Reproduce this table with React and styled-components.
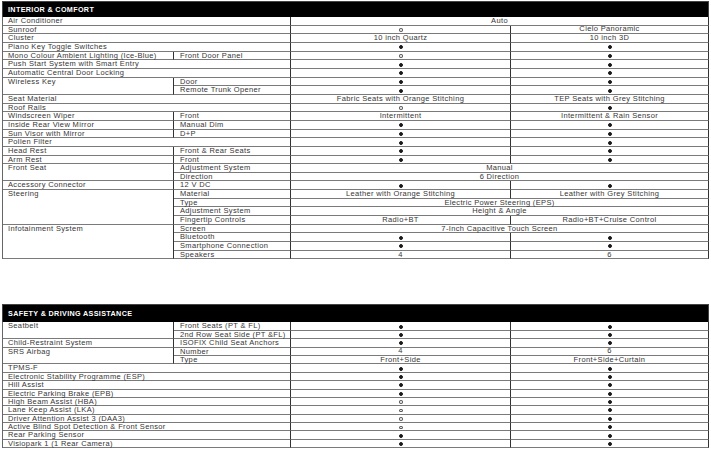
import React from "react";
import styled, { createGlobalStyle } from "styled-components";

const GlobalStyle = createGlobalStyle`
  html, body {
    margin: 0;
    padding: 0;
    background: #fff;
  }
  body {
    font-family: "Liberation Sans", Arial, sans-serif;
    color: #333;
  }
`;

const D = "dot";
const O = "ring";

const interior = [
  { f: "Air Conditioner", v: ["Auto"] },
  { f: "Sunroof", v: [O, "Cielo Panoramic"] },
  { f: "Cluster", v: ["10 inch Quartz", "10 inch 3D"] },
  { f: "Piano Key Toggle Switches", v: [D, D] },
  { f: "Mono Colour Ambient Lighting (Ice-Blue)", s: "Front Door Panel", v: [O, D] },
  { f: "Push Start System with Smart Entry", v: [D, D] },
  { f: "Automatic Central Door Locking", v: [D, D] },
  { f: "Wireless Key", rows: 2, s: "Door", v: [D, D] },
  { s: "Remote Trunk Opener", v: [D, D] },
  { f: "Seat Material", v: ["Fabric Seats with Orange Stitching", "TEP Seats with Grey Stitching"] },
  { f: "Roof Rails", v: [O, D] },
  { f: "Windscreen Wiper", s: "Front", v: ["Intermittent", "Intermittent & Rain Sensor"] },
  { f: "Inside Rear View Mirror", s: "Manual Dim", v: [D, D] },
  { f: "Sun Visor with Mirror", s: "D+P", v: [D, D] },
  { f: "Pollen Filter", v: [D, D] },
  { f: "Head Rest", s: "Front & Rear Seats", v: [D, D] },
  { f: "Arm Rest", s: "Front", v: [D, D] },
  { f: "Front Seat", rows: 2, s: "Adjustment System", v: ["Manual"] },
  { s: "Direction", v: ["6 Direction"] },
  { f: "Accessory Connector", s: "12 V DC", v: [D, D] },
  { f: "Steering", rows: 4, s: "Material", v: ["Leather with Orange Stitching", "Leather with Grey Stitching"] },
  { s: "Type", v: ["Electric Power Steering (EPS)"] },
  { s: "Adjustment System", v: ["Height & Angle"] },
  { s: "Fingertip Controls", v: ["Radio+BT", "Radio+BT+Cruise Control"] },
  { f: "Infotainment System", rows: 4, s: "Screen", v: ["7-Inch Capacitive Touch Screen"] },
  { s: "Bluetooth", v: [D, D] },
  { s: "Smartphone Connection", v: [D, D] },
  { s: "Speakers", v: ["4", "6"] },
];

const safety = [
  { f: "Seatbelt", rows: 2, s: "Front Seats (PT & FL)", v: [D, D] },
  { s: "2nd Row Seat Side (PT &FL)", v: [D, D] },
  { f: "Child-Restraint System", s: "ISOFIX Child Seat Anchors", v: [D, D] },
  { f: "SRS Airbag", rows: 2, s: "Number", v: ["4", "6"] },
  { s: "Type", v: ["Front+Side", "Front+Side+Curtain"] },
  { f: "TPMS-F", v: [D, D] },
  { f: "Electronic Stability Programme (ESP)", v: [D, D] },
  { f: "Hill Assist", v: [D, D] },
  { f: "Electric Parking Brake (EPB)", v: [D, D] },
  { f: "High Beam Assist (HBA)", v: [O, D] },
  { f: "Lane Keep Assist (LKA)", v: [O, D] },
  { f: "Driver Attention Assist 3 (DAA3)", v: [O, D] },
  { f: "Active Blind Spot Detection & Front Sensor", v: [O, D] },
  { f: "Rear Parking Sensor", v: [D, D] },
  { f: "Visiopark 1 (1 Rear Camera)", v: [D, D] },
];

const Page = styled.div`
  display: flex;
  flex-direction: column;
  gap: 45px;
  padding: 1px 2px 0 2px;
  width: 707px;
`;

const Section = styled.section`
  display: flex;
  flex-direction: column;
`;

const HeaderBar = styled.div`
  height: ${(p) => p.$h}px;
  background: #000;
  color: #fff;
  font-weight: 700;
  font-size: 7.2px;
  letter-spacing: 0.35px;
  line-height: ${(p) => p.$h}px;
  padding-left: 5px;
  border: 1px solid #444;
  border-bottom: none;
  box-sizing: border-box;
`;

const Grid = styled.div`
  display: grid;
  grid-template-columns: 171px 117px 220px 1fr;
  grid-auto-rows: ${(p) => p.$row}px;
  border-left: 1px solid #666;
`;

const Cell = styled.div`
  box-sizing: border-box;
  grid-column: span ${(p) => p.$cols || 1};
  grid-row: span ${(p) => p.$rows || 1};
  border-right: 1px solid #333;
  border-bottom: 1px solid #7a7a7a;
  font-size: 7.5px;
  letter-spacing: 0.35px;
  line-height: 8px;
  white-space: nowrap;
  overflow: visible;
  color: #363636;
`;

const Label = styled(Cell)`
  padding-left: 5px;
`;

const Sub = styled(Cell)`
  padding-left: 6px;
`;

const Value = styled(Cell)`
  text-align: center;
  display: flex;
  justify-content: center;
  align-items: center;
`;

const Dot = styled.span`
  display: inline-block;
  box-sizing: border-box;
  width: 4px;
  height: ${(p) => (p.$filled ? 4 : 3.5)}px;
  border-radius: 50%;
  background: ${(p) => (p.$filled ? "#1a1a1a" : "transparent")};
  border: 1px solid ${(p) => (p.$filled ? "#1a1a1a" : "#555")};
  margin-top: 1px;
`;

const renderValue = (v) => {
  if (v === D) return <Dot $filled />;
  if (v === O) return <Dot />;
  return v;
};

const SpecTable = ({ title, rows, rowH, headH }) => (
  <Section>
    <HeaderBar $h={headH}>{title}</HeaderBar>
    <Grid $row={rowH}>
      {rows.map((r, i) => (
        <React.Fragment key={i}>
          {r.f && (r.s ? (
            <Label $rows={r.rows}>{r.f}</Label>
          ) : (
            <Label $cols={2}>{r.f}</Label>
          ))}
          {r.s && <Sub>{r.s}</Sub>}
          {r.v.length === 1 ? (
            <Value $cols={2}>{renderValue(r.v[0])}</Value>
          ) : (
            r.v.map((v, j) => <Value key={j}>{renderValue(v)}</Value>)
          )}
        </React.Fragment>
      ))}
    </Grid>
  </Section>
);

export default function App() {
  return (
    <>
      <GlobalStyle />
      <Page>
        <SpecTable title="INTERIOR & COMFORT" rows={interior} rowH={8.66} headH={16} />
        <SpecTable title="SAFETY & DRIVING ASSISTANCE" rows={safety} rowH={8.4} headH={18} />
      </Page>
    </>
  );
}
